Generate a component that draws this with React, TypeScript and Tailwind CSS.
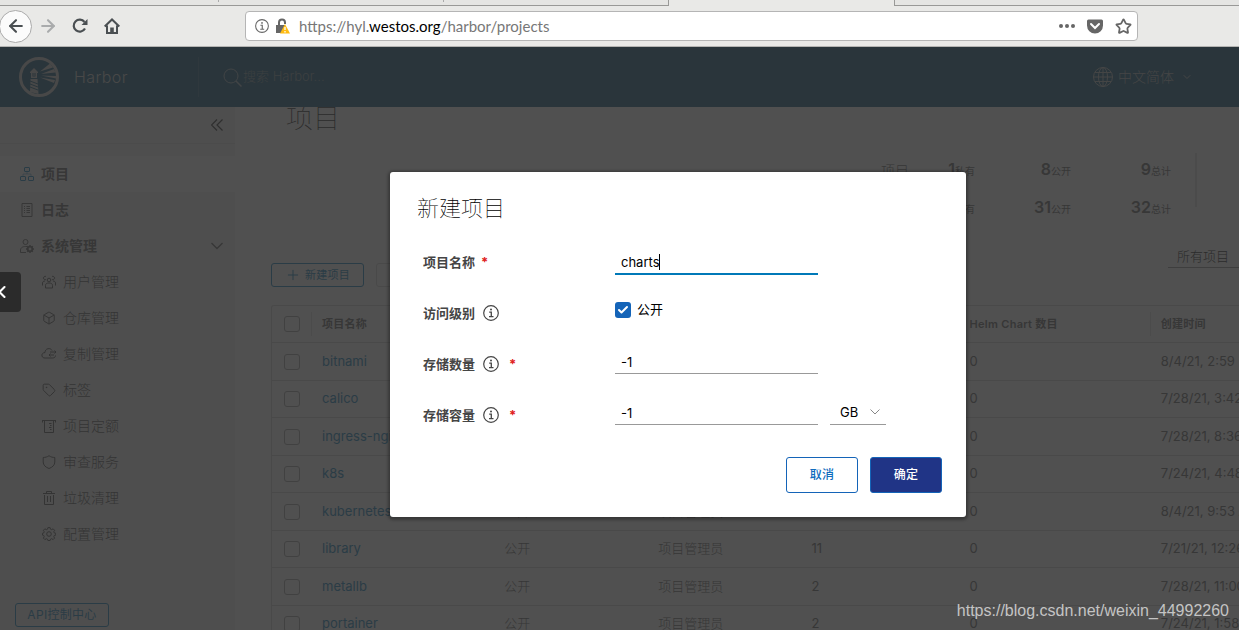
import React from 'react';
import { ArrowLeft, ArrowRight, Box, Check, ChevronDown, ChevronLeft, Plus, Star, Tag } from 'lucide-react';

const FONT = "font-['Inter','Noto_Sans_CJK_SC',sans-serif]";

type IconProps = { children: React.ReactNode; className?: string };

const Glyph: React.FC<IconProps> = ({ children, className = 'size-[14px]' }) => (
  <svg viewBox="0 0 14 14" fill="none" stroke="currentColor" strokeWidth="1" className={`shrink-0 ${className}`}>
    {children}
  </svg>
);

const ProjectsIcon = () => (
  <Glyph className="size-[14px] text-[#0079b8]">
    <rect x="4.5" y="0.5" width="5" height="4" rx="0.5" />
    <rect x="0.5" y="9.5" width="5" height="4" rx="0.5" />
    <rect x="8.5" y="9.5" width="5" height="4" rx="0.5" />
    <path d="M7 4.5V7M3 9V7h8v2" strokeOpacity="0.5" />
  </Glyph>
);

const LogsIcon = () => (
  <Glyph>
    <path d="M2 .5h10v13H2zM4 3.5h1M6.5 3.5H10M4 5.5h1M6.5 5.5H10M4 7.5h1M6.5 7.5H10M4 9.5h1M6.5 9.5H10" />
  </Glyph>
);

const AdminIcon = () => (
  <Glyph>
    <circle cx="5.5" cy="3" r="2.5" />
    <path d="M7 7.6C3.5 7 .5 8.5.5 11v2.5H6" />
    <circle cx="10" cy="10" r="2.3" strokeWidth="1.8" />
    <path d="M10 6v1.5M10 12.5V14M6 10h1.5M12.5 10H14M7.2 7.2l1 1M11.8 11.8l1 1M12.8 7.2l-1 1M8.2 11.8l-1 1" strokeWidth="1.4" />
  </Glyph>
);

const UsersIcon = () => (
  <Glyph>
    <circle cx="7" cy="5" r="1.8" />
    <path d="M3.5 13v-2.5C3.5 8.5 5 8 7 8s3.5.5 3.5 2.5V13z" />
    <path d="M4 4.5A1.7 1.7 0 1 1 4 1.5M10 4.5a1.7 1.7 0 1 0 0-3M.5 10.5V8C.5 6.8 1.5 6 3 6M13.5 10.5V8c0-1.2-1-2-2.5-2" />
  </Glyph>
);

const ReplicationIcon = () => (
  <Glyph className="-mx-px h-[14px] w-4">
    <path d="M10 3.5C9 1.5 7.5 1.5 6 1.7 4 2 3 3.8 3 5.5.5 5.700-.5 7.500 0 9c.4 1.500 1.500 2 3 2h7.500c2 0 3-1 3-2.500" />
    <path d="M8 5h6M12.5 3.5L14 5l-1.5 1.5M12 8H7M8.5 6.5L7 8l1.5 1.5" />
  </Glyph>
);

const QuotaIcon = () => (
  <Glyph>
    <path d="M0 1.5h14M2.5 1.5v12h9v-12M7 4.5h2.5M8 6.5h1.5M7 8.5h2.5M8 10.5h1.5M.5 1.5v2M13.5 1.5v2" />
  </Glyph>
);

const ShieldIcon = () => (
  <Glyph>
    <path d="M7 .7c1.800 1.300 3.800 1.800 5.800 1.800V7c0 3-2.300 5.300-5.800 6.500C3.500 12.300 1.200 10 1.200 7V2.500c2 0 4-.5 5.800-1.800z" />
  </Glyph>
);

const TrashIcon = () => (
  <Glyph>
    <path d="M1 2.5h12M4.5 2.5v-2h5v2M2.5 4v9.5h9V4M5.5 5v6M8.5 5v6" />
  </Glyph>
);

const GearIcon = () => (
  <Glyph>
    <circle cx="7" cy="7" r="2.3" />
    <path d="M5.900.6h2.200l.4 1.600 1.200.5 1.400-.9 1.500 1.500-.8 1.400.4 1.200 1.600.4v1.800l-1.600.4-.4 1.200.8 1.400-1.500 1.500-1.400-.9-1.200.5-.4 1.300H5.900l-.4-1.300-1.200-.5-1.400.9-1.500-1.500.8-1.400-.4-1.200-1.300-.4V6.300l1.300-.4.4-1.200-.8-1.400 1.500-1.500 1.400.9 1.200-.5z" />
  </Glyph>
);

const InfoIcon = ({ className = 'size-4' }) => (
  <svg viewBox="0 0 16 16" fill="none" stroke="currentColor" className={className}>
    <circle cx="8" cy="8" r="7.3" strokeWidth="1.2" />
    <circle cx="8" cy="4.5" r="1" fill="currentColor" stroke="none" />
    <path d="M6.2 7.2H8.3V11.7M6 11.7h4.5" strokeWidth="1.3" />
  </svg>
);

const HarborLogo = () => (
  <svg viewBox="0 0 40 40" className="size-10 text-[#c8c8c8]" fill="currentColor">
    <circle cx="20" cy="20" r="18.5" fill="none" stroke="currentColor" strokeWidth="3" />
    <path d="M11 15l4-4 4 4v1h-1v5h-6v-5h-1z" />
    <path d="M13.5 16h3v3.5h-3z" fill="#004b70" />
    <path d="M14.5 16h1v3h-1z" />
    <path d="M11.5 22h7l1 15-8.5-2z" />
    <path d="M11 24l8 3M11 27l8 3M11 30l8 3" stroke="#004b70" strokeWidth="1" />
    <path d="M21 14.5l10-8 3 4zM22 17l13-5 1.5 3.5zM22 18.5l15 .5v2.5zM21 20.5l15 2.5-1 3z" />
  </svg>
);

const BrowserChrome: React.FC = () => (
  <div className="border-b border-[#b4b4b2] bg-[#e9e9e7] text-[#4a4f52]">
    <div className="flex h-[6px]">
      <div className="flex w-[54%] border-b border-r border-[#999997] bg-[#e5e5e3]">
        <div className="h-[2px] w-[219px] border-r border-[#aaa]" />
        <div className="h-[2px] w-[225px] border-r border-[#aaa]" />
      </div>
      <div className="w-[225px]" />
      <div className="flex-1 border-b border-l border-[#999997] bg-[#e5e5e3]" />
    </div>
    <div className="flex h-10 items-center">
      <button aria-label="Back" className="-ml-px flex size-[33px] shrink-0 items-center justify-center rounded-full border border-[#aaa] bg-[#fbfbfb]">
        <ArrowLeft size={20} strokeWidth={2.5} />
      </button>
      <button aria-label="Forward" className="ml-1.5 text-[#a9abac]">
        <ArrowRight size={20} strokeWidth={2.5} />
      </button>
      <button aria-label="Reload" className="ml-3.5">
        <svg viewBox="0 0 16 16" className="size-4" fill="none" stroke="currentColor" strokeWidth="2.2">
          <path d="M13 10.5A6 6 0 1 1 12.5 4" />
          <path d="M15.5 1v6h-6z" fill="currentColor" stroke="none" />
        </svg>
      </button>
      <button aria-label="Home" className="ml-4">
        <svg viewBox="0 0 16 16" className="size-4" fill="none" stroke="currentColor" strokeWidth="2">
          <path d="M.7 8.5L8 1.5l7.3 7M3 7.5V15h10V7.5" />
          <path d="M6.2 9.5h3.6V15H6.2z" fill="currentColor" stroke="none" />
        </svg>
      </button>
      <div className="ml-[125px] mr-[101px] flex h-[30px] flex-1 items-center rounded border border-[#b5b5b5] bg-white pl-[9px] pr-[5px] text-[#666]">
        <InfoIcon className="size-[14px]" />
        <svg viewBox="0 0 14 16" className="ml-[7px] h-4 w-[14px]">
          <path d="M3 8V4.5a3 3 0 0 1 6 0V6" fill="none" stroke="#666" strokeWidth="2" />
          <path d="M0 7h9v8H0z" fill="#666" />
          <path d="M9 6l5 9.5H4z" fill="#fb1" />
          <path d="M9 9v3M9 13v1.5" stroke="#fff" strokeWidth="1.3" />
        </svg>
        <div className="ml-[9px] flex-1 font-['Lato',sans-serif] text-[15px] leading-5 text-[#777]">
          https://hyl.<span className="text-black">westos.org</span>/harbor/projects
        </div>
        <svg viewBox="0 0 16 4" className="h-1 w-4" fill="currentColor">
          <circle cx="2" cy="2" r="2" />
          <circle cx="8" cy="2" r="2" />
          <circle cx="14" cy="2" r="2" />
        </svg>
        <svg viewBox="0 0 16 15" className="ml-3 h-[15px] w-4">
          <path d="M1.5.5h13a1.5 1.5 0 0 1 1.5 1.5v4.500a8 8 0 0 1-16 0V2A1.5 1.5 0 0 1 1.5.5z" fill="#666" />
          <path d="M4 5l4 4 4-4" fill="none" stroke="#fff" strokeWidth="2" strokeLinecap="round" />
        </svg>
        <Star size={17} strokeWidth={2.5} className="ml-3" />
      </div>
    </div>
  </div>
);

const Header: React.FC = () => (
  <header className="flex h-[60px] items-center bg-[#004b70] pl-[19px] text-[#c8c8c8]">
    <HarborLogo />
    <span className="ml-[15px] w-[124px] text-base font-light tracking-wide">Harbor</span>
    <div className="h-10 w-px bg-[#265f80]" />
    <svg viewBox="0 0 19 19" className="ml-6 size-[19px] text-[#9aacb6]" fill="none" stroke="currentColor">
      <circle cx="8" cy="8" r="7" />
      <path d="M13 13l5.5 5.5" strokeWidth="1.5" />
    </svg>
    <input aria-label="搜索" placeholder="搜索 Harbor..." className="w-40 bg-transparent pl-px text-[13px] font-light placeholder:text-[#7d8f99]" />
    <button className="ml-auto mr-[46px] flex items-center text-sm font-light text-[#b0b4b6]">
      <svg viewBox="0 0 20 20" className="mr-[5px] size-5" fill="none" stroke="currentColor">
        <circle cx="10" cy="10" r="9.5" />
        <ellipse cx="10" cy="10" rx="4.5" ry="9.5" />
        <path d="M10 .5v19M.5 10h19M2 5.5h16M2 14.5h16" />
      </svg>
      中文简体
      <ChevronDown size={12} strokeWidth={2} className="ml-[7px]" />
    </button>
  </header>
);

const subItems = [
  { label: '用户管理', icon: <UsersIcon /> },
  { label: '仓库管理', icon: <Box size={14} strokeWidth={1.7} /> },
  { label: '复制管理', icon: <ReplicationIcon /> },
  { label: '标签', icon: <Tag size={14} strokeWidth={1.7} /> },
  { label: '项目定额', icon: <QuotaIcon /> },
  { label: '审查服务', icon: <ShieldIcon /> },
  { label: '垃圾清理', icon: <TrashIcon /> },
  { label: '配置管理', icon: <GearIcon /> },
];

const Sidebar: React.FC = () => (
  <nav className="flex w-[235px] shrink-0 flex-col bg-[#eee] text-sm text-[#565656]">
    <div className="flex h-[37px] shrink-0 items-center justify-end border-b border-[#ddd] pr-3">
      <button aria-label="折叠">
        <svg viewBox="0 0 12 12" className="size-3" fill="none" stroke="#222" strokeWidth="1.2">
          <path d="M6 .5L.5 6 6 11.500M11.500.5L6 6l5.500 5.500" />
        </svg>
      </button>
    </div>
    <div className="mt-3 font-semibold">
      <a href="#projects" className="flex h-9 items-center gap-[7px] bg-white pl-5">
        <ProjectsIcon />项目
      </a>
      <a href="#logs" className="flex h-9 items-center gap-[7px] pl-5">
        <LogsIcon />日志
      </a>
      <button className="flex h-9 w-full items-center gap-[7px] pl-5 pr-3">
        <AdminIcon />系统管理
        <svg viewBox="0 0 12 8" className="ml-auto h-2 w-3" fill="none" stroke="currentColor">
          <path d="M.5 1L6 6.500 11.500 1" strokeWidth="1.3" />
        </svg>
      </button>
    </div>
    {subItems.map((item) => (
      <a key={item.label} href="#system" className="flex h-9 shrink-0 items-center gap-[7px] pl-[42px] font-light text-[#444]">
        {item.icon}
        {item.label}
      </a>
    ))}
    <button className="mb-[3px] ml-[15px] mt-auto h-6 w-[94px] shrink-0 rounded-[3px] border border-[#0079b8] text-xs tracking-wide text-[#0079b8]">
      API控制中心
    </button>
  </nav>
);

const stats = [
  { label: '项目', counts: ['1', '8', '9'] },
  { label: '镜像仓库', counts: ['1', '31', '32'] },
];
const kinds = ['私有', '公开', '总计'];

const projects = [
  { name: 'bitnami', repos: '0', created: '8/4/21, 2:59 PM' },
  { name: 'calico', repos: '4', created: '7/28/21, 3:42 PM' },
  { name: 'ingress-nginx', repos: '2', created: '7/28/21, 8:36 AM' },
  { name: 'k8s', repos: '7', created: '7/24/21, 4:48 PM' },
  { name: 'kubernetesui', repos: '2', created: '8/4/21, 9:53 AM' },
  { name: 'library', repos: '11', created: '7/21/21, 12:26 PM' },
  { name: 'metallb', repos: '2', created: '7/28/21, 11:00 AM' },
  { name: 'portainer', repos: '2', created: '7/24/21, 1:58 PM' },
];

const columns = [
  { title: '项目名称', width: 'w-[182px]' },
  { title: '访问级别', width: 'w-[154px]' },
  { title: '角色', width: 'w-[153px]' },
  { title: '镜像仓库数', width: 'w-[158px]' },
  { title: 'Helm Chart 数目', width: 'w-[191px]' },
  { title: '创建时间', width: 'w-[182px]' },
];

const RowCheck: React.FC<{ label: string }> = ({ label }) => (
  <input type="checkbox" aria-label={label} className="ml-3 block size-4 appearance-none rounded-[3px] border border-[#9a9a9a]" />
);

const Projects: React.FC = () => (
  <main className="min-w-0 flex-1 overflow-hidden bg-[#fafafa] pl-9 text-[#565656]">
    <h2 className="pl-[15px] text-[27px] font-thin leading-6 text-black">项目</h2>
    <div className="mt-[22px] flex justify-end pr-[42px]">
      <div className="border-r-2 border-[#ddd] pr-6 pt-1">
        {stats.map((row) => (
          <div key={row.label} className="grid h-[38px] grid-cols-[58px_36px_96px_100px] items-start leading-6 last:h-3">
            <span className="whitespace-nowrap pt-1 text-sm font-light">{row.label}</span>
            {row.counts.map((count, i) => (
              <span key={kinds[i]} className="text-right">
                <b className="text-base font-semibold">{count}</b>
                <span className="text-[10px]">{kinds[i]}</span>
              </span>
            ))}
          </div>
        ))}
      </div>
    </div>
    <div className="mt-[39px] flex h-6 justify-end">
      <select aria-label="项目类型" className="h-[22px] w-[71px] appearance-none border-b border-[#888] pl-[9px] text-[13px] font-light text-black">
        <option>所有项目</option>
      </select>
    </div>
    <div className="-mt-[7px] flex gap-3">
      <button className="flex h-6 w-[93px] items-center justify-center gap-1 rounded-[3px] border border-[#0079b8] text-[11px] tracking-wide text-[#0079b8]">
        <Plus size={16} strokeWidth={1.5} />新建项目
      </button>
      <button className="h-6 w-[80px] rounded-[3px] border border-[#d0d0d0] text-[11px]">删除</button>
    </div>
    <table className="mt-[18px] w-[1062px] table-fixed border-separate border-spacing-0 rounded-t-[3px] border border-b-0 border-[#d0d0d0] text-left text-[13px]">
      <thead>
        <tr className="h-[37px] text-[11px]">
          <th className="w-[39px] border-b border-[#d0d0d0] p-0"><RowCheck label="全选" /></th>
          {columns.map((col) => (
            <th key={col.title} className={`${col.width} border-b border-[#d0d0d0] p-0 font-semibold tracking-wide`}>
              <div className="flex h-6 items-center border-l border-[#ddd] pl-[10px]">{col.title}</div>
            </th>
          ))}
        </tr>
      </thead>
      <tbody className="[&_td]:border-b [&_td]:border-[#d0d0d0] [&_td]:py-0 [&_td]:pl-[11px] [&_td]:pr-0">
        {projects.map((p) => (
          <tr key={p.name} className="h-[37px] odd:h-[38px] [&>td:first-child]:pl-0">
            <td><RowCheck label={p.name} /></td>
            <td><a href="#project" className="text-[#0079b8]">{p.name}</a></td>
            <td className="font-light">公开</td>
            <td className="font-light">项目管理员</td>
            <td>{p.repos}</td>
            <td>0</td>
            <td className="whitespace-nowrap">{p.created}</td>
          </tr>
        ))}
      </tbody>
    </table>
  </main>
);

type FieldProps = { id: string; label: string; info?: boolean; required?: boolean; children: React.ReactNode };

const Field: React.FC<FieldProps> = ({ id, label, info, required, children }) => (
  <div className="flex h-[51px] items-start pt-3">
    <label htmlFor={id} className="flex w-48 items-center text-[13px] font-bold leading-[26px] text-[#454545]">
      {label}
      {info && <InfoIcon className="ml-2 size-4" />}
      {required && <span className={info ? 'ml-[10px] text-[#e02020]' : 'ml-1.5 text-[#e02020]'}>*</span>}
    </label>
    {children}
  </div>
);

const inputClass = 'block h-[23px] w-[203px] border-b border-[#999] px-1.5 text-[13px] text-black outline-none';

const NewProjectDialog: React.FC = () => (
  <form role="dialog" aria-label="新建项目" className="w-[576px] rounded-[3px] bg-white px-6 py-6 shadow-[0_1px_3px_2px_rgba(0,0,0,0.3)]">
    <h3 className="pl-[3px] text-[22px] font-thin leading-6 text-black">新建项目</h3>
    <div className="mt-[17px] pl-[9px]">
      <Field id="name" label="项目名称" required>
        <div className="relative">
          <input id="name" defaultValue="charts" className="block h-[26px] w-[203px] border-b-2 border-[#0079b8] px-1.5 pt-0.5 text-[13px] text-black outline-none" />
          <span className="absolute left-11 top-[5px] h-4 w-px bg-black" />
        </div>
      </Field>
      <Field id="public" label="访问级别" info>
        <div className="flex h-5 items-center gap-1.5 text-[13px] text-black">
          <span className="relative size-4">
            <input id="public" type="checkbox" defaultChecked className="block size-4 appearance-none rounded-[3px] bg-[#1464b8]" />
            <Check size={12} strokeWidth={4} className="pointer-events-none absolute left-0.5 top-0.5 text-white" />
          </span>
          <label htmlFor="public">公开</label>
        </div>
      </Field>
      <Field id="count" label="存储数量" info required>
        <input id="count" defaultValue="-1" className={inputClass} />
      </Field>
      <Field id="storage" label="存储容量" info required>
        <input id="storage" defaultValue="-1" className={inputClass} />
        <div className="relative ml-3">
          <select aria-label="单位" className="block h-[23px] w-14 appearance-none border-b border-[#999] pl-[10px] text-[13px] text-black">
            <option>GB</option>
          </select>
          <svg viewBox="0 0 10 6" className="pointer-events-none absolute right-1.5 top-[7px] h-1.5 w-[10px]" fill="none" stroke="#888">
            <path d="M.5.5L5 5 9.500.5" />
          </svg>
        </div>
      </Field>
    </div>
    <div className="mt-4 flex justify-end gap-3 text-xs font-medium tracking-wide">
      <button type="button" className="h-9 w-[72px] rounded-[3px] border border-[#1464b8] text-[#0f6cbd]">取消</button>
      <button type="button" className="h-9 w-[72px] rounded-[3px] border border-[#1464b8] bg-[#203486] text-white">确定</button>
    </div>
  </form>
);

const App: React.FC = () => (
  <div className={`flex h-screen flex-col overflow-hidden ${FONT}`}>
    <BrowserChrome />
    <div className="relative flex min-h-0 flex-1 flex-col">
      <Header />
      <div className="flex min-h-0 flex-1">
        <Sidebar />
        <Projects />
      </div>
      <div className="absolute inset-0 flex items-center justify-center bg-[#313131]/85 pl-[117px] pt-3">
        <NewProjectDialog />
      </div>
      <button aria-label="上一张" className="absolute left-0 top-[225px] flex h-10 w-[21px] items-center rounded-r bg-[#2b2b2b] text-white">
        <ChevronLeft size={20} strokeWidth={2.5} className="-ml-2" />
      </button>
      <span className="absolute bottom-[9px] right-[10px] font-['Liberation_Sans',sans-serif] text-base leading-5 text-[#c4c4c4]">
        https://blog.csdn.net/weixin_44992260
      </span>
    </div>
  </div>
);

export default App;
